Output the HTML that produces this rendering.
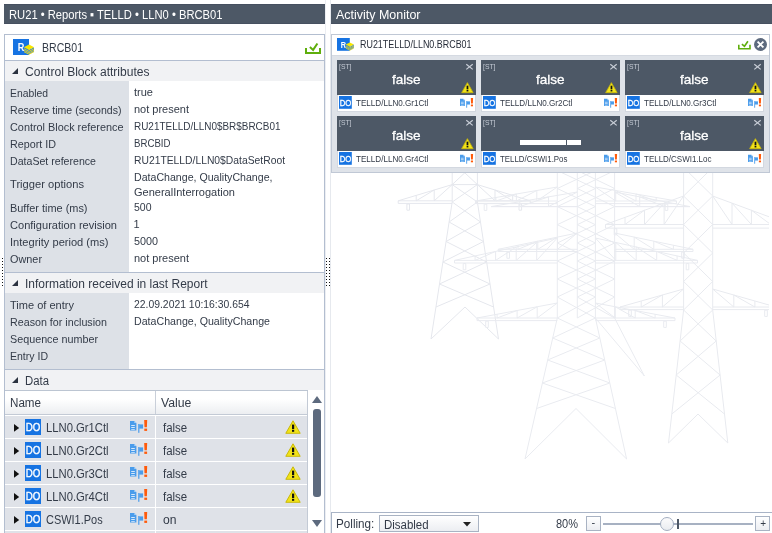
<!DOCTYPE html>
<html lang="en"><head><meta charset="utf-8"><title>BRCB01 - Activity Monitor</title>
<style>
html,body{margin:0;padding:0}
body{width:772px;height:533px;position:relative;overflow:hidden;background:#fff;font-family:"Liberation Sans",sans-serif}
.a{position:absolute;box-sizing:border-box}
.t{position:absolute;white-space:nowrap;line-height:1;transform-origin:0 50%;display:block}
.bar{background:#4d5866;height:20px;top:4px;border-top:1px solid #465060;border-bottom:1px solid #465060}
.sec{background:#f1f2f4;left:5px;width:319px;height:20px}
.lab{background:#dde1e7;left:5px;width:124px}
.row{background:#dfe2e8;left:5px;height:22px}
.tile{width:139px;height:52px}
.tile .d{position:absolute;left:0;top:0;width:139px;height:34.5px;background:#4d5866}
.tile .w{position:absolute;left:0;top:34.5px;width:139px;height:17px;background:#fff;border:1px solid #d3d8e0;border-top:0;box-sizing:border-box}
svg{position:absolute;overflow:visible}
svg text{font-family:"Liberation Sans",sans-serif}
svg.tw{overflow:hidden}
.wt{-webkit-text-stroke:0.3px #fff}
.tl{position:absolute;left:0;top:0;width:772px;height:533px;will-change:transform}

</style></head>
<body>
<div class="tl">
<svg width="0" height="0" style="left:0;top:0">
<defs>
<symbol id="warn" viewBox="0 0 16 14" overflow="visible">
 <path d="M8 0.8 L15.2 13.3 L0.8 13.3 Z" fill="#f2e318" stroke="#c9b90a" stroke-width="1" stroke-linejoin="round"/>
 <rect x="7" y="4.6" width="2.2" height="4.6" fill="#111"/>
 <rect x="7" y="10" width="2.2" height="1.8" fill="#111"/>
</symbol>
<symbol id="flag" viewBox="0 0 18 13" overflow="visible">
 <path d="M0 1 L4.4 1 L6.4 3 L6.4 10.6 L0 10.6 Z" fill="#4a9ceb"/>
 <path d="M4.4 1 L4.4 3 L6.4 3 Z" fill="#b9d9f8"/>
 <rect x="1.2" y="5" width="3.6" height="1" fill="#d6e9fb"/>
 <rect x="1.2" y="7" width="3.6" height="1" fill="#d6e9fb"/>
 <rect x="1.2" y="9" width="3.6" height="0.8" fill="#d6e9fb"/>
 <rect x="8.2" y="4" width="1.2" height="8.8" fill="#4a9ceb"/>
 <rect x="9.2" y="4.4" width="3.9" height="4.2" fill="#4a9ceb"/>
 <path d="M14.2 0 L17.2 0 L16.9 7.2 L14.5 7.2 Z" fill="#ff5a0a"/>
 <rect x="14.3" y="8.6" width="2.8" height="2.3" fill="#ff5a0a"/>
</symbol>
<symbol id="chk" viewBox="0 0 16 12" overflow="visible">
 <path d="M0 5.9h2v4h12v-4h2v6.1h-16z" fill="#5fae0c"/>
 <path d="M4.9 5.1 L8.1 7.9 L12.4 1.5" fill="none" stroke="#5fae0c" stroke-width="2"/>
</symbol>
<symbol id="ricon" viewBox="0 0 22 16" overflow="visible">
 <rect x="0" y="0" width="16" height="16" fill="#1673e2"/>
 <text x="4.8" y="12.1" font-size="11.6" font-weight="700" fill="#fff" textLength="6.6" lengthAdjust="spacingAndGlyphs">R</text>
 <path d="M11 8.2 L16 10.8 L21 8.2 L21 12.6 L16 15.2 L11 12.6 Z" fill="#2a7be4"/>
 <path d="M11 9.8 L16 12.4 L21 9.8 M11 11.3 L16 13.9 L21 11.3 M11 12.7 L16 15.3 L21 12.7" fill="none" stroke="#e6d91c" stroke-width="0.9"/>
 <path d="M10.8 8.2 L16 5.5 L21.2 8.2 L16 10.9 Z" fill="#f7e600"/>
</symbol>
<symbol id="do" viewBox="0 0 16 16" overflow="visible">
 <rect x="0" y="0" width="16" height="16" fill="#1673e2"/>
 <text x="8.1" y="12.1" font-size="11.4" fill="#fff" stroke="#fff" stroke-width="0.35" text-anchor="middle" textLength="14.6" lengthAdjust="spacingAndGlyphs">DO</text>
</symbol>
</defs></svg>
<div class="a bar" style="left:4px;width:321px"></div>
<div class="a bar" style="left:331px;width:441px"></div>
<div class="a" style="left:4px;top:34px;width:321px;height:510px;border:1px solid #b3bed0"></div>
<div class="a" style="left:5px;top:60px;width:319px;height:1px;background:#b3bed0"></div>
<svg style="left:13px;top:39px" width="22" height="16"><use href="#ricon"/></svg>
<svg style="left:305px;top:42px" width="16" height="12"><use href="#chk"/></svg>
<div class="a sec" style="top:61px"></div>
<div class="a lab" style="top:81px;height:191px"></div>
<div class="a" style="left:5px;top:272px;width:319px;height:1px;background:#b3bed0"></div>
<div class="a sec" style="top:273px"></div>
<div class="a lab" style="top:293px;height:76px"></div>
<div class="a" style="left:5px;top:369px;width:319px;height:1px;background:#b3bed0"></div>
<div class="a sec" style="top:370px"></div>
<svg style="left:12px;top:68px" width="6" height="6"><path d="M6 0 V6 H0 Z" fill="#2b3240"/></svg>
<svg style="left:12px;top:280px" width="6" height="6"><path d="M6 0 V6 H0 Z" fill="#2b3240"/></svg>
<svg style="left:12px;top:377px" width="6" height="6"><path d="M6 0 V6 H0 Z" fill="#2b3240"/></svg>
<div class="a" style="left:5px;top:390px;width:303px;height:1px;background:#bcc5d2"></div>
<div class="a" style="left:5px;top:391px;width:302px;height:23px;background:linear-gradient(#fff,#fff 35%,#eceef1)"></div>
<div class="a" style="left:5px;top:414px;width:302px;height:1px;background:#c3cad5"></div>
<div class="a" style="left:155px;top:391px;width:1px;height:23px;background:#c9cfd9"></div>
<div class="a" style="left:307px;top:391px;width:1px;height:150px;background:#c3cad5"></div>
<div class="a row" style="top:416px;width:150px"></div>
<div class="a row" style="top:416px;left:156px;width:151px"></div>
<svg style="left:13.8px;top:423.6px" width="5.2" height="7.8"><path d="M0 0 L5.2 3.9 L0 7.8 Z" fill="#111"/></svg>
<svg style="left:25px;top:419px" width="16" height="16"><use href="#do"/></svg>
<svg style="left:129.8px;top:420px" width="18" height="13"><use href="#flag"/></svg>
<svg style="left:285px;top:419.7px" width="16" height="14"><use href="#warn"/></svg>
<div class="a row" style="top:439px;width:150px"></div>
<div class="a row" style="top:439px;left:156px;width:151px"></div>
<svg style="left:13.8px;top:446.6px" width="5.2" height="7.8"><path d="M0 0 L5.2 3.9 L0 7.8 Z" fill="#111"/></svg>
<svg style="left:25px;top:442px" width="16" height="16"><use href="#do"/></svg>
<svg style="left:129.8px;top:443px" width="18" height="13"><use href="#flag"/></svg>
<svg style="left:285px;top:442.7px" width="16" height="14"><use href="#warn"/></svg>
<div class="a row" style="top:462px;width:150px"></div>
<div class="a row" style="top:462px;left:156px;width:151px"></div>
<svg style="left:13.8px;top:469.6px" width="5.2" height="7.8"><path d="M0 0 L5.2 3.9 L0 7.8 Z" fill="#111"/></svg>
<svg style="left:25px;top:465px" width="16" height="16"><use href="#do"/></svg>
<svg style="left:129.8px;top:466px" width="18" height="13"><use href="#flag"/></svg>
<svg style="left:285px;top:465.7px" width="16" height="14"><use href="#warn"/></svg>
<div class="a row" style="top:485px;width:150px"></div>
<div class="a row" style="top:485px;left:156px;width:151px"></div>
<svg style="left:13.8px;top:492.6px" width="5.2" height="7.8"><path d="M0 0 L5.2 3.9 L0 7.8 Z" fill="#111"/></svg>
<svg style="left:25px;top:488px" width="16" height="16"><use href="#do"/></svg>
<svg style="left:129.8px;top:489px" width="18" height="13"><use href="#flag"/></svg>
<svg style="left:285px;top:488.7px" width="16" height="14"><use href="#warn"/></svg>
<div class="a row" style="top:508px;width:150px"></div>
<div class="a row" style="top:508px;left:156px;width:151px"></div>
<svg style="left:13.8px;top:515.6px" width="5.2" height="7.8"><path d="M0 0 L5.2 3.9 L0 7.8 Z" fill="#111"/></svg>
<svg style="left:25px;top:511px" width="16" height="16"><use href="#do"/></svg>
<svg style="left:129.8px;top:512px" width="18" height="13"><use href="#flag"/></svg>
<div class="a row" style="top:531px;width:150px"></div>
<div class="a row" style="top:531px;left:156px;width:151px"></div>
<svg style="left:312px;top:396.2px" width="10" height="7"><path d="M5 0 L10 7 H0 Z" fill="#5d6a7e"/></svg>
<div class="a" style="left:313px;top:409px;width:8px;height:88px;border-radius:3px;background:#5d6a7e"></div>
<svg style="left:312px;top:520.3px" width="10" height="7"><path d="M0 0 H10 L5 7 Z" fill="#5d6a7e"/></svg>
<svg style="left:326px;top:258px" width="4" height="30" fill="#111"><rect x="0" y="0" width="1" height="1"/><rect x="3" y="0" width="1" height="1"/><rect x="0" y="3" width="1" height="1"/><rect x="3" y="3" width="1" height="1"/><rect x="0" y="6" width="1" height="1"/><rect x="3" y="6" width="1" height="1"/><rect x="0" y="9" width="1" height="1"/><rect x="3" y="9" width="1" height="1"/><rect x="0" y="12" width="1" height="1"/><rect x="3" y="12" width="1" height="1"/><rect x="0" y="15" width="1" height="1"/><rect x="3" y="15" width="1" height="1"/><rect x="0" y="18" width="1" height="1"/><rect x="3" y="18" width="1" height="1"/><rect x="0" y="21" width="1" height="1"/><rect x="3" y="21" width="1" height="1"/><rect x="0" y="24" width="1" height="1"/><rect x="3" y="24" width="1" height="1"/><rect x="0" y="27" width="1" height="1"/><rect x="3" y="27" width="1" height="1"/></svg>
<svg style="left:2px;top:258px" width="1" height="30" fill="#111"><rect x="0" y="0" width="1" height="1"/><rect x="0" y="3" width="1" height="1"/><rect x="0" y="6" width="1" height="1"/><rect x="0" y="9" width="1" height="1"/><rect x="0" y="12" width="1" height="1"/><rect x="0" y="15" width="1" height="1"/><rect x="0" y="18" width="1" height="1"/><rect x="0" y="21" width="1" height="1"/><rect x="0" y="24" width="1" height="1"/><rect x="0" y="27" width="1" height="1"/></svg>
<svg class="tw" style="left:332px;top:173px" width="437" height="339" viewBox="332 173 437 339"><path d="M452.2 161.0L452.2 202.0M477.4 161.0L477.4 202.0M452.2 161.0L477.4 184.6M477.4 161.0L452.2 184.6M452.2 184.6L477.4 202.0M477.4 184.6L452.2 202.0M452.2 184.6L477.4 184.6M452.2 202.0L431.0 339.0M477.4 202.0L498.5 339.0M452.2 202.0L480.5 222.0M477.4 202.0L449.1 222.0M449.1 222.0L483.5 241.5M480.5 222.0L446.1 241.5M446.1 241.5L486.6 262.0M483.5 241.5L442.9 262.0M442.9 262.0L490.0 284.0M486.6 262.0L439.5 284.0M439.5 284.0L493.6 307.0M490.0 284.0L436.0 307.0M431.0 339.0L465.0 307.0M498.5 339.0L465.0 307.0M452.2 200.8L398.2 200.8M452.2 203.4L398.2 203.4M398.2 200.8L398.2 203.4M452.2 184.6L398.2 200.8M434.2 190.0L434.2 200.8M452.2 184.6L434.2 200.8M416.2 195.4L416.2 200.8M434.2 190.0L416.2 200.8M406.9 204.0h2.6v6.2h-2.6zM477.4 200.8L530.3 200.8M477.4 203.4L530.3 203.4M530.3 200.8L530.3 203.4M477.4 184.6L530.3 200.8M495.0 190.0L495.0 200.8M477.4 184.6L495.0 200.8M512.7 195.4L512.7 200.8M495.0 190.0L512.7 200.8M519.0 204.0h2.6v6.2h-2.6z" fill="none" stroke="#e5e7ed" stroke-width="1"/><path d="M557.3 170.5L557.3 318.0M595.4 170.5L595.4 318.0M557.3 170.5L595.4 188.5M595.4 170.5L557.3 188.5M557.3 188.5L595.4 206.6M595.4 188.5L557.3 206.6M557.3 206.6L595.4 224.7M595.4 206.6L557.3 224.7M557.3 224.7L595.4 243.0M595.4 224.7L557.3 243.0M557.3 243.0L595.4 261.0M595.4 243.0L557.3 261.0M557.3 261.0L595.4 279.0M595.4 261.0L557.3 279.0M557.3 279.0L595.4 297.0M595.4 279.0L557.3 297.0M557.3 297.0L595.4 318.0M595.4 297.0L557.3 318.0M577.3 170.5L577.3 318.0M614.6 170.5L614.6 318.0M577.3 170.5L614.6 188.5M614.6 170.5L577.3 188.5M577.3 188.5L614.6 206.6M614.6 188.5L577.3 206.6M577.3 206.6L614.6 224.7M614.6 206.6L577.3 224.7M577.3 224.7L614.6 243.0M614.6 224.7L577.3 243.0M577.3 243.0L614.6 261.0M614.6 243.0L577.3 261.0M577.3 261.0L614.6 279.0M614.6 261.0L577.3 279.0M577.3 279.0L614.6 297.0M614.6 279.0L577.3 297.0M577.3 297.0L614.6 318.0M614.6 297.0L577.3 318.0M557.3 318.0L525.0 459.0M595.4 318.0L626.6 459.0M557.3 318.0L599.8 338.0M595.4 318.0L552.7 338.0M552.7 338.0L604.7 360.0M599.8 338.0L547.7 360.0M547.7 360.0L609.8 383.0M604.7 360.0L542.4 383.0M542.4 383.0L615.4 408.5M609.8 383.0L536.6 408.5M525.0 459.0L576.0 408.5M626.6 459.0L576.0 408.5M595.4 318.0L644.4 376.0M614.6 318.0L644.4 376.0M557.3 201.0L475.5 201.0M557.3 203.6L475.5 203.6M475.5 201.0L475.5 203.6M557.3 187.0L475.5 201.0M536.8 190.5L536.8 201.0M557.3 187.0L536.8 201.0M516.4 194.0L516.4 201.0M536.8 190.5L516.4 201.0M495.9 197.5L495.9 201.0M516.4 194.0L495.9 201.0M484.2 204.2h2.6v6.2h-2.6zM595.4 201.0L676.5 201.0M595.4 203.6L676.5 203.6M676.5 201.0L676.5 203.6M595.4 187.0L676.5 201.0M615.7 190.5L615.7 201.0M595.4 187.0L615.7 201.0M636.0 194.0L636.0 201.0M615.7 190.5L636.0 201.0M656.2 197.5L656.2 201.0M636.0 194.0L656.2 201.0M665.2 204.2h2.6v6.2h-2.6zM557.3 260.4L454.5 260.4M557.3 263.0L454.5 263.0M454.5 260.4L454.5 263.0M557.3 238.0L454.5 260.4M536.7 242.5L536.7 260.4M557.3 238.0L536.7 260.4M516.2 247.0L516.2 260.4M536.7 242.5L516.2 260.4M495.6 251.4L495.6 260.4M516.2 247.0L495.6 260.4M475.1 255.9L475.1 260.4M495.6 251.4L475.1 260.4M463.2 263.6h2.6v6.2h-2.6zM595.4 260.4L697.5 260.4M595.4 263.0L697.5 263.0M697.5 260.4L697.5 263.0M595.4 238.0L697.5 260.4M615.8 242.5L615.8 260.4M595.4 238.0L615.8 260.4M636.2 247.0L636.2 260.4M615.8 242.5L636.2 260.4M656.7 251.4L656.7 260.4M636.2 247.0L656.7 260.4M677.1 255.9L677.1 260.4M656.7 251.4L677.1 260.4M686.2 263.6h2.6v6.2h-2.6zM557.3 318.0L477.0 318.0M557.3 320.6L477.0 320.6M477.0 318.0L477.0 320.6M557.3 303.0L477.0 318.0M537.2 306.8L537.2 318.0M557.3 303.0L537.2 318.0M517.1 310.5L517.1 318.0M537.2 306.8L517.1 318.0M497.1 314.2L497.1 318.0M517.1 310.5L497.1 318.0M485.7 321.2h2.6v6.2h-2.6zM595.4 318.0L675.0 318.0M595.4 320.6L675.0 320.6M675.0 318.0L675.0 320.6M595.4 303.0L675.0 318.0M615.3 306.8L615.3 318.0M595.4 303.0L615.3 318.0M635.2 310.5L635.2 318.0M615.3 306.8L635.2 318.0M655.1 314.2L655.1 318.0M635.2 310.5L655.1 318.0M663.7 321.2h2.6v6.2h-2.6zM577.3 206.6L491.0 206.6M577.3 206.6L491.0 206.6M491.0 206.6L491.0 206.6M577.3 192.0L491.0 206.6M548.5 196.9L548.5 206.6M577.3 192.0L548.5 206.6M519.8 201.7L519.8 206.6M548.5 196.9L519.8 206.6M614.6 206.6L690.0 206.6M614.6 206.6L690.0 206.6M690.0 206.6L690.0 206.6M614.6 192.0L690.0 206.6M639.7 196.9L639.7 206.6M614.6 192.0L639.7 206.6M664.9 201.7L664.9 206.6M639.7 196.9L664.9 206.6M577.3 249.3L498.2 249.3M577.3 251.5L498.2 251.5M498.2 249.3L498.2 251.5M577.3 233.0L498.2 249.3M557.5 237.1L557.5 249.3M577.3 233.0L557.5 249.3M537.8 241.2L537.8 249.3M557.5 237.1L537.8 249.3M518.0 245.2L518.0 249.3M537.8 241.2L518.0 249.3M506.9 252.1h2.6v6.2h-2.6zM614.6 249.3L693.0 249.3M614.6 251.5L693.0 251.5M693.0 249.3L693.0 251.5M614.6 233.0L693.0 249.3M634.2 237.1L634.2 249.3M614.6 233.0L634.2 249.3M653.8 241.2L653.8 249.3M634.2 237.1L653.8 249.3M673.4 245.2L673.4 249.3M653.8 241.2L673.4 249.3M681.7 252.1h2.6v6.2h-2.6z" fill="none" stroke="#e9ebf0" stroke-width="1"/><path d="M683.6 167.5L683.6 310.0M712.7 167.5L712.7 310.0M683.6 167.5L712.7 196.0M712.7 167.5L683.6 196.0M683.6 196.0L712.7 224.5M712.7 196.0L683.6 224.5M683.6 224.5L712.7 253.0M712.7 224.5L683.6 253.0M683.6 253.0L712.7 281.5M712.7 253.0L683.6 281.5M683.6 281.5L712.7 310.0M712.7 281.5L683.6 310.0M683.6 310.0L668.5 443.0M712.7 310.0L727.8 443.0M683.6 310.0L716.2 341.0M712.7 310.0L680.1 341.0M680.1 341.0L720.1 375.0M716.2 341.0L676.2 375.0M676.2 375.0L724.5 414.0M720.1 375.0L671.8 414.0M668.5 443.0L698.0 414.0M727.8 443.0L698.0 414.0M683.6 224.5L605.5 224.5M683.6 228.1L605.5 228.1M605.5 224.5L605.5 228.1M683.6 196.0L605.5 224.5M664.1 203.1L664.1 224.5M683.6 196.0L664.1 224.5M644.5 210.2L644.5 224.5M664.1 203.1L644.5 224.5M625.0 217.4L625.0 224.5M644.5 210.2L625.0 224.5M614.2 228.7h2.6v6.2h-2.6zM712.7 224.5L790.0 224.5M712.7 228.1L790.0 228.1M790.0 224.5L790.0 228.1M712.7 196.0L790.0 224.5M732.0 203.1L732.0 224.5M712.7 196.0L732.0 224.5M751.4 210.2L751.4 224.5M732.0 203.1L751.4 224.5M770.7 217.4L770.7 224.5M751.4 210.2L770.7 224.5M778.7 228.7h2.6v6.2h-2.6zM683.6 307.0L620.0 307.0M683.6 309.6L620.0 309.6M620.0 307.0L620.0 309.6M683.6 289.0L620.0 307.0M662.4 295.0L662.4 307.0M683.6 289.0L662.4 307.0M641.2 301.0L641.2 307.0M662.4 295.0L641.2 307.0M628.7 310.2h2.6v6.2h-2.6zM712.7 307.0L776.0 307.0M712.7 309.6L776.0 309.6M776.0 307.0L776.0 309.6M712.7 289.0L776.0 307.0M733.8 295.0L733.8 307.0M712.7 289.0L733.8 307.0M754.9 301.0L754.9 307.0M733.8 295.0L754.9 307.0M764.7 310.2h2.6v6.2h-2.6z" fill="none" stroke="#e8eaef" stroke-width="1"/></svg>
<div class="a" style="left:325px;top:0;width:6px;height:533px;border-left:1px solid #eceef2;border-right:1px solid #e6e9ee"></div>
<div class="a" style="left:331px;top:34px;width:439px;height:139px;border:1px solid #c0c8d5"></div>
<div class="a" style="left:332px;top:55px;width:437px;height:117px;background:#dfe3e9;border-top:1px solid #d5dae2"></div>
<div class="a" style="left:331px;top:512px;width:441px;height:30px;border-left:1px solid #a9b4c6;border-top:1px solid #a9b4c6"></div>
<svg style="left:337px;top:38.2px" width="17.6" height="12.8"><use href="#ricon"/></svg>
<svg style="left:738px;top:40.2px" width="12.8" height="9.6"><use href="#chk"/></svg>
<svg style="left:754px;top:38px" width="13" height="13"><circle cx="6.5" cy="6.5" r="6.5" fill="#5d6a7e"/><path d="M3.6 3.6 L9.4 9.4 M9.4 3.6 L3.6 9.4" stroke="#fff" stroke-width="1.9"/></svg>
<div class="a tile" style="left:337px;top:60px"><div class="d"></div><div class="w"></div></div>
<svg style="left:466px;top:64.3px" width="7" height="5.6"><path d="M0.3 0.2 L6.7 5.4 M6.7 0.2 L0.3 5.4" stroke="#c9ced7" stroke-width="1.2"/></svg>
<svg style="left:339.2px;top:96.2px" width="12.8" height="12.8"><use href="#do"/></svg>
<svg style="left:459.8px;top:98.4px" width="13.7" height="9.9"><use href="#flag"/></svg>
<svg style="left:461px;top:81.8px" width="12.8" height="11.2"><use href="#warn"/></svg>
<div class="a tile" style="left:481px;top:60px"><div class="d"></div><div class="w"></div></div>
<svg style="left:610px;top:64.3px" width="7" height="5.6"><path d="M0.3 0.2 L6.7 5.4 M6.7 0.2 L0.3 5.4" stroke="#c9ced7" stroke-width="1.2"/></svg>
<svg style="left:483.2px;top:96.2px" width="12.8" height="12.8"><use href="#do"/></svg>
<svg style="left:603.8px;top:98.4px" width="13.7" height="9.9"><use href="#flag"/></svg>
<svg style="left:605px;top:81.8px" width="12.8" height="11.2"><use href="#warn"/></svg>
<div class="a tile" style="left:625px;top:60px"><div class="d"></div><div class="w"></div></div>
<svg style="left:754px;top:64.3px" width="7" height="5.6"><path d="M0.3 0.2 L6.7 5.4 M6.7 0.2 L0.3 5.4" stroke="#c9ced7" stroke-width="1.2"/></svg>
<svg style="left:627.2px;top:96.2px" width="12.8" height="12.8"><use href="#do"/></svg>
<svg style="left:747.8px;top:98.4px" width="13.7" height="9.9"><use href="#flag"/></svg>
<svg style="left:749px;top:81.8px" width="12.8" height="11.2"><use href="#warn"/></svg>
<div class="a tile" style="left:337px;top:116px"><div class="d"></div><div class="w"></div></div>
<svg style="left:466px;top:120.3px" width="7" height="5.6"><path d="M0.3 0.2 L6.7 5.4 M6.7 0.2 L0.3 5.4" stroke="#c9ced7" stroke-width="1.2"/></svg>
<svg style="left:339.2px;top:152.2px" width="12.8" height="12.8"><use href="#do"/></svg>
<svg style="left:459.8px;top:154.4px" width="13.7" height="9.9"><use href="#flag"/></svg>
<svg style="left:461px;top:137.8px" width="12.8" height="11.2"><use href="#warn"/></svg>
<div class="a tile" style="left:481px;top:116px"><div class="d"></div><div class="w"></div></div>
<svg style="left:610px;top:120.3px" width="7" height="5.6"><path d="M0.3 0.2 L6.7 5.4 M6.7 0.2 L0.3 5.4" stroke="#c9ced7" stroke-width="1.2"/></svg>
<svg style="left:483.2px;top:152.2px" width="12.8" height="12.8"><use href="#do"/></svg>
<svg style="left:603.8px;top:154.4px" width="13.7" height="9.9"><use href="#flag"/></svg>
<div class="a" style="left:519.7px;top:139.8px;width:46.3px;height:4.8px;background:#fff"></div>
<div class="a" style="left:567.3px;top:139.8px;width:13.7px;height:4.8px;background:#fff"></div>
<div class="a tile" style="left:625px;top:116px"><div class="d"></div><div class="w"></div></div>
<svg style="left:754px;top:120.3px" width="7" height="5.6"><path d="M0.3 0.2 L6.7 5.4 M6.7 0.2 L0.3 5.4" stroke="#c9ced7" stroke-width="1.2"/></svg>
<svg style="left:627.2px;top:152.2px" width="12.8" height="12.8"><use href="#do"/></svg>
<svg style="left:747.8px;top:154.4px" width="13.7" height="9.9"><use href="#flag"/></svg>
<svg style="left:749px;top:137.8px" width="12.8" height="11.2"><use href="#warn"/></svg>
<div class="a" style="left:379px;top:515px;width:100px;height:16.5px;border:1px solid #a9b3c3;background:linear-gradient(#fff,#eceef2)"></div>
<svg style="left:463px;top:522.4px" width="8" height="4.4"><path d="M0 0 H8 L4 4.4 Z" fill="#222"/></svg>
<div class="a" style="left:586px;top:516px;width:15px;height:15px;border:1px solid #a9b3c3;background:linear-gradient(#fff,#eceef2)"></div>
<div class="a" style="left:755px;top:516px;width:15px;height:15px;border:1px solid #a9b3c3;background:linear-gradient(#fff,#eceef2)"></div>
<div class="a" style="left:603px;top:523px;width:150px;height:2px;background:#a7b1c2"></div>
<div class="a" style="left:677px;top:519px;width:2px;height:10px;background:#4d5866"></div>
<div class="a" style="left:660px;top:517px;width:14px;height:14px;border-radius:50%;border:1px solid #a3aec0;background:linear-gradient(#fbfbfc,#e9ecf0)"></div>
<!-- text layer -->
<span class="t" style="left:9.0px;top:8px;font-size:13px;color:#fff;transform:scaleX(0.8616);">RU21 • Reports ▪ TELLD • LLN0 • BRCB01</span>
<span class="t" style="left:335.5px;top:8px;font-size:13px;color:#fff;transform:scaleX(0.9587);">Activity Monitor</span>
<span class="t" style="left:41.5px;top:41px;font-size:13px;color:#333b48;transform:scaleX(0.8106);">BRCB01</span>
<span class="t" style="left:24.9px;top:66px;font-size:12px;color:#333b48;transform:translateY(-0.5px) scaleX(1.0035);">Control Block attributes</span>
<span class="t" style="left:24.9px;top:278px;font-size:12px;color:#333b48;transform:translateY(-0.3px) scaleX(0.9985);">Information received in last Report</span>
<span class="t" style="left:24.9px;top:375px;font-size:12px;color:#333b48;transform:translateY(-0.4px) scaleX(0.9464);">Data</span>
<span class="t" style="left:9.6px;top:88px;font-size:11px;color:#333b48;transform:translateY(-0.4px) scaleX(0.9412);">Enabled</span>
<span class="t" style="left:9.6px;top:105px;font-size:11px;color:#333b48;transform:translateY(-0.4px) scaleX(0.9599);">Reserve time (seconds)</span>
<span class="t" style="left:9.6px;top:122px;font-size:11px;color:#333b48;transform:translateY(-0.4px) scaleX(0.9874);">Control Block reference</span>
<span class="t" style="left:9.6px;top:139px;font-size:11px;color:#333b48;transform:translateY(-0.4px) scaleX(0.9771);">Report ID</span>
<span class="t" style="left:9.6px;top:156px;font-size:11px;color:#333b48;transform:translateY(-0.4px) scaleX(0.9632);">DataSet reference</span>
<span class="t" style="left:9.6px;top:179px;font-size:11px;color:#333b48;transform:translateY(-0.4px) scaleX(1.0141);">Trigger options</span>
<span class="t" style="left:9.6px;top:203px;font-size:11px;color:#333b48;transform:translateY(-0.4px) scaleX(0.9932);">Buffer time (ms)</span>
<span class="t" style="left:9.6px;top:220px;font-size:11px;color:#333b48;transform:translateY(-0.4px) scaleX(1.0057);">Configuration revision</span>
<span class="t" style="left:9.6px;top:237px;font-size:11px;color:#333b48;transform:translateY(-0.4px) scaleX(1.0070);">Integrity period (ms)</span>
<span class="t" style="left:9.6px;top:254px;font-size:11px;color:#333b48;transform:translateY(-0.4px) scaleX(0.9875);">Owner</span>
<span class="t" style="left:9.6px;top:300px;font-size:11px;color:#333b48;transform:scaleX(1.0034);">Time of entry</span>
<span class="t" style="left:9.6px;top:317px;font-size:11px;color:#333b48;transform:scaleX(0.9732);">Reason for inclusion</span>
<span class="t" style="left:9.6px;top:334px;font-size:11px;color:#333b48;transform:scaleX(0.9788);">Sequence number</span>
<span class="t" style="left:9.6px;top:351px;font-size:11px;color:#333b48;transform:scaleX(0.9564);">Entry ID</span>
<span class="t" style="left:133.5px;top:87px;font-size:11px;color:#333b48;transform:translateY(-0.3px) scaleX(1.0016);">true</span>
<span class="t" style="left:133.5px;top:104px;font-size:11px;color:#333b48;transform:translateY(-0.3px) scaleX(0.9991);">not present</span>
<span class="t" style="left:133.5px;top:121px;font-size:11px;color:#333b48;transform:translateY(-0.3px) scaleX(0.9041);">RU21TELLD/LLN0$BR$BRCB01</span>
<span class="t" style="left:133.5px;top:138px;font-size:11px;color:#333b48;transform:translateY(-0.3px) scaleX(0.8782);">BRCBID</span>
<span class="t" style="left:133.5px;top:155px;font-size:11px;color:#333b48;transform:translateY(-0.3px) scaleX(0.9390);">RU21TELLD/LLN0$DataSetRoot</span>
<span class="t" style="left:133.5px;top:172px;font-size:11px;color:#333b48;transform:translateY(-0.4px) scaleX(0.9637);">DataChange, QualityChange,</span>
<span class="t" style="left:133.5px;top:187px;font-size:11px;color:#333b48;transform:translateY(-0.3px) scaleX(1.0009);">GeneralInterrogation</span>
<span class="t" style="left:133.5px;top:202px;font-size:11px;color:#333b48;transform:translateY(-0.3px) scaleX(0.9532);">500</span>
<span class="t" style="left:133.5px;top:219px;font-size:11px;color:#333b48;transform:translateY(-0.3px);">1</span>
<span class="t" style="left:133.5px;top:236px;font-size:11px;color:#333b48;transform:translateY(-0.3px) scaleX(0.9802);">5000</span>
<span class="t" style="left:133.5px;top:253px;font-size:11px;color:#333b48;transform:translateY(-0.3px) scaleX(0.9991);">not present</span>
<span class="t" style="left:133.5px;top:299px;font-size:11px;color:#333b48;transform:scaleX(0.9441);">22.09.2021 10:16:30.654</span>
<span class="t" style="left:133.5px;top:316px;font-size:11px;color:#333b48;transform:scaleX(0.9669);">DataChange, QualityChange</span>
<span class="t" style="left:9.5px;top:397px;font-size:12px;color:#333b48;transform:translateY(-0.3px) scaleX(0.9683);">Name</span>
<span class="t" style="left:161.2px;top:397px;font-size:12px;color:#333b48;transform:translateY(-0.3px) scaleX(1.0197);">Value</span>
<span class="t" style="left:45.8px;top:422px;font-size:12px;color:#333b48;transform:translateY(-0.2px) scaleX(0.9385);">LLN0.Gr1Ctl</span>
<span class="t" style="left:162.5px;top:422px;font-size:12px;color:#333b48;transform:translateY(-0.4px) scaleX(0.9543);">false</span>
<span class="t" style="left:45.8px;top:445px;font-size:12px;color:#333b48;transform:translateY(-0.2px) scaleX(0.9385);">LLN0.Gr2Ctl</span>
<span class="t" style="left:162.5px;top:445px;font-size:12px;color:#333b48;transform:translateY(-0.4px) scaleX(0.9543);">false</span>
<span class="t" style="left:45.8px;top:468px;font-size:12px;color:#333b48;transform:translateY(-0.2px) scaleX(0.9385);">LLN0.Gr3Ctl</span>
<span class="t" style="left:162.5px;top:468px;font-size:12px;color:#333b48;transform:translateY(-0.4px) scaleX(0.9543);">false</span>
<span class="t" style="left:45.8px;top:491px;font-size:12px;color:#333b48;transform:translateY(-0.2px) scaleX(0.9385);">LLN0.Gr4Ctl</span>
<span class="t" style="left:162.5px;top:491px;font-size:12px;color:#333b48;transform:translateY(-0.4px) scaleX(0.9543);">false</span>
<span class="t" style="left:45.8px;top:514px;font-size:12px;color:#333b48;transform:translateY(-0.2px) scaleX(0.9127);">CSWI1.Pos</span>
<span class="t" style="left:162.5px;top:514px;font-size:12px;color:#333b48;transform:translateY(-0.4px) scaleX(1.0105);">on</span>
<span class="t" style="left:359.7px;top:40px;font-size:10.4px;color:#262c38;transform:translateY(0.2px) scaleX(0.8580);">RU21TELLD/LLN0.BRCB01</span>
<span class="t" style="left:355.5px;top:98px;font-size:9.6px;color:#333b48;transform:translateY(-0.2px) scaleX(0.8434);">TELLD/LLN0.Gr1Ctl</span>
<span class="t" style="left:338.6px;top:63px;font-size:8px;color:#c5cbd5;transform:translateY(-0.2px) scaleX(0.8452);">[ST]</span>
<span class="t wt" style="left:392.2px;top:73px;font-size:13px;color:#fff;transform:translateY(0.3px) scaleX(1.0412);">false</span>
<span class="t" style="left:499.5px;top:98px;font-size:9.6px;color:#333b48;transform:translateY(-0.2px) scaleX(0.8434);">TELLD/LLN0.Gr2Ctl</span>
<span class="t" style="left:482.6px;top:63px;font-size:8px;color:#c5cbd5;transform:translateY(-0.2px) scaleX(0.8452);">[ST]</span>
<span class="t wt" style="left:536.2px;top:73px;font-size:13px;color:#fff;transform:translateY(0.3px) scaleX(1.0412);">false</span>
<span class="t" style="left:643.5px;top:98px;font-size:9.6px;color:#333b48;transform:translateY(-0.2px) scaleX(0.8434);">TELLD/LLN0.Gr3Ctl</span>
<span class="t" style="left:626.6px;top:63px;font-size:8px;color:#c5cbd5;transform:translateY(-0.2px) scaleX(0.8452);">[ST]</span>
<span class="t wt" style="left:680.2px;top:73px;font-size:13px;color:#fff;transform:translateY(0.3px) scaleX(1.0412);">false</span>
<span class="t" style="left:355.5px;top:154px;font-size:9.6px;color:#333b48;transform:translateY(-0.2px) scaleX(0.8434);">TELLD/LLN0.Gr4Ctl</span>
<span class="t" style="left:338.6px;top:119px;font-size:8px;color:#c5cbd5;transform:translateY(-0.2px) scaleX(0.8452);">[ST]</span>
<span class="t wt" style="left:392.2px;top:129px;font-size:13px;color:#fff;transform:translateY(0.3px) scaleX(1.0412);">false</span>
<span class="t" style="left:499.5px;top:154px;font-size:9.6px;color:#333b48;transform:translateY(-0.2px) scaleX(0.8209);">TELLD/CSWI1.Pos</span>
<span class="t" style="left:482.6px;top:119px;font-size:8px;color:#c5cbd5;transform:translateY(-0.2px) scaleX(0.8452);">[ST]</span>
<span class="t" style="left:643.5px;top:154px;font-size:9.6px;color:#333b48;transform:translateY(-0.2px) scaleX(0.8329);">TELLD/CSWI1.Loc</span>
<span class="t" style="left:626.6px;top:119px;font-size:8px;color:#c5cbd5;transform:translateY(-0.2px) scaleX(0.8452);">[ST]</span>
<span class="t wt" style="left:680.2px;top:129px;font-size:13px;color:#fff;transform:translateY(0.3px) scaleX(1.0412);">false</span>
<span class="t" style="left:336.1px;top:518px;font-size:12px;color:#333b48;transform:scaleX(0.9731);">Polling:</span>
<span class="t" style="left:383.6px;top:519px;font-size:12px;color:#333b48;transform:translateY(-0.4px) scaleX(0.9550);">Disabled</span>
<span class="t" style="left:556.4px;top:518px;font-size:12px;color:#333b48;transform:translateY(-0.4px) scaleX(0.9155);">80%</span>
<span class="t" style="left:591.4px;top:517px;font-size:11px;color:#333b48;">-</span>
<span class="t" style="left:760.3px;top:519px;font-size:10px;color:#333b48;">+</span>
</div>
</body></html>
